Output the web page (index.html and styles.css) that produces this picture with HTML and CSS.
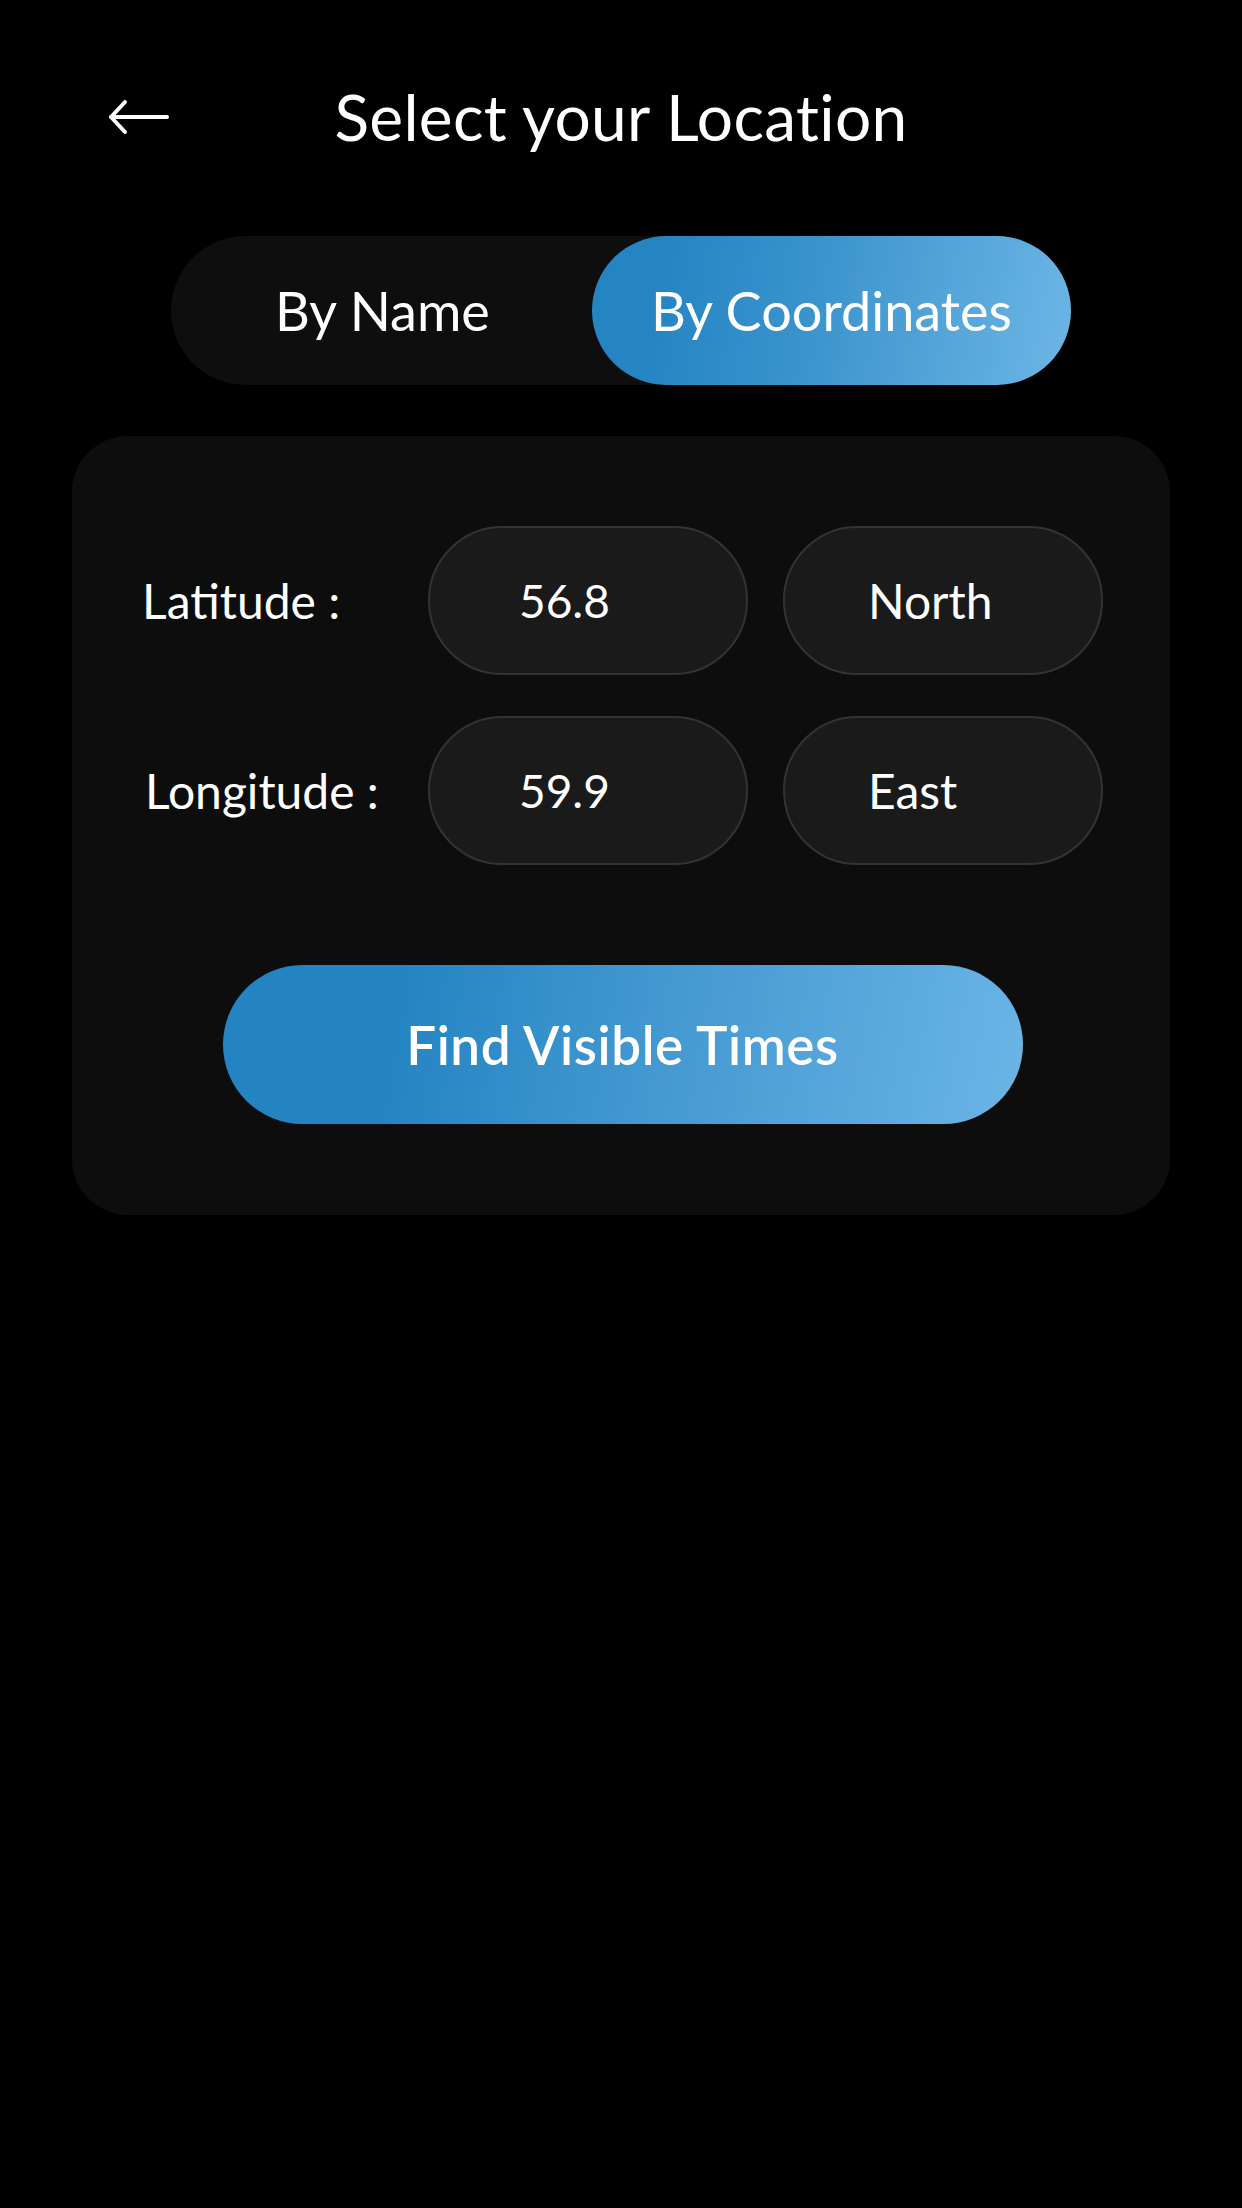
FILE: index.html
```html
<!DOCTYPE html>
<html lang="en">
<head>
<meta charset="utf-8">
<title>Select your Location</title>
<link rel="stylesheet" href="styles.css">
</head>
<body>
<div class="screen">
  <header class="header">
    <button class="back" aria-label="Back">
      <svg width="62" height="36" viewBox="0 0 62 36" fill="none" stroke="#fff" stroke-width="4" stroke-linecap="round" stroke-linejoin="round">
        <path d="M3 18 H59"/>
        <path d="M17 3 L3 18 L17 33"/>
      </svg>
    </button>
    <h1 class="title">Select your Location</h1>
  </header>

  <div class="toggle">
    <div class="tab">By Name</div>
    <div class="tab tab-active">By Coordinates</div>
  </div>

  <section class="card">
    <div class="row">
      <div class="label">Latitude :</div>
      <div class="field">56.8</div>
      <div class="field field-dir">North</div>
    </div>
    <div class="row">
      <div class="label label-long">Longitude :</div>
      <div class="field">59.9</div>
      <div class="field field-dir">East</div>
    </div>
    <button class="find">Find Visible Times</button>
  </section>
</div>
</body>
</html>
```

FILE: styles.css
```css
* { box-sizing: border-box; }

html, body {
  margin: 0;
  padding: 0;
  background: #000;
}

body {
  font-family: "Lato", "Noto Sans", sans-serif;
  color: #fff;
  width: 1242px;
  min-height: 2208px;
}

.screen {
  display: flex;
  flex-direction: column;
  align-items: center;
}

.header {
  position: relative;
  width: 100%;
  height: 236px;
  display: flex;
  align-items: center;
  justify-content: center;
}

.back {
  position: absolute;
  left: 108px;
  top: 99px;
  background: none;
  border: 0;
  padding: 0;
  display: block;
  line-height: 0;
}

.title {
  margin: 0;
  font-size: 64px;
  font-weight: 400;
  letter-spacing: 0.3px;
  padding-bottom: 4px;
}

.toggle {
  width: 900px;
  height: 149px;
  border-radius: 75px;
  background: #0e0e0e;
  display: flex;
}

.tab {
  flex: 0 0 421px;
  display: flex;
  align-items: center;
  justify-content: center;
  font-size: 54px;
  padding-bottom: 1px;
  padding-left: 2px;
}

.tab-active {
  flex: 1;
  border-radius: 75px;
  background: linear-gradient(100deg, #2585c3 15%, #3a93cc 45%, #6db6e6 100%);
  padding-left: 0;
}

.card {
  margin-top: 51px;
  width: 1098px;
  background: #0d0d0d;
  border-radius: 56px;
  padding: 90px 67px 91px 70px;
  display: flex;
  flex-direction: column;
  align-items: center;
}

.row {
  width: 100%;
  display: flex;
  align-items: center;
  gap: 35px;
}

.row + .row {
  margin-top: 41px;
}

.label {
  flex: 0 0 251px;
  font-size: 48px;
  padding-bottom: 0;
}

.label-long {
  padding-left: 3px;
}

.field {
  flex: 0 0 320px;
  height: 149px;
  border-radius: 75px;
  background: #1a1a1a;
  border: 2px solid #333;
  display: flex;
  align-items: center;
  padding-left: 89px;
  padding-bottom: 0;
  font-size: 46px;
}

.field-dir {
  padding-left: 83px;
  font-size: 48px;
}

.find {
  margin-top: 100px;
  width: 800px;
  height: 159px;
  border: 0;
  border-radius: 80px;
  background: linear-gradient(100deg, #2484c2 22%, #3b93cc 45%, #6bb5e6 100%);
  color: #fff;
  font-family: "Lato", "Noto Sans", sans-serif;
  font-size: 53px;
  font-weight: 600;
  padding-bottom: 2px;
  letter-spacing: 0.6px;
}
```
